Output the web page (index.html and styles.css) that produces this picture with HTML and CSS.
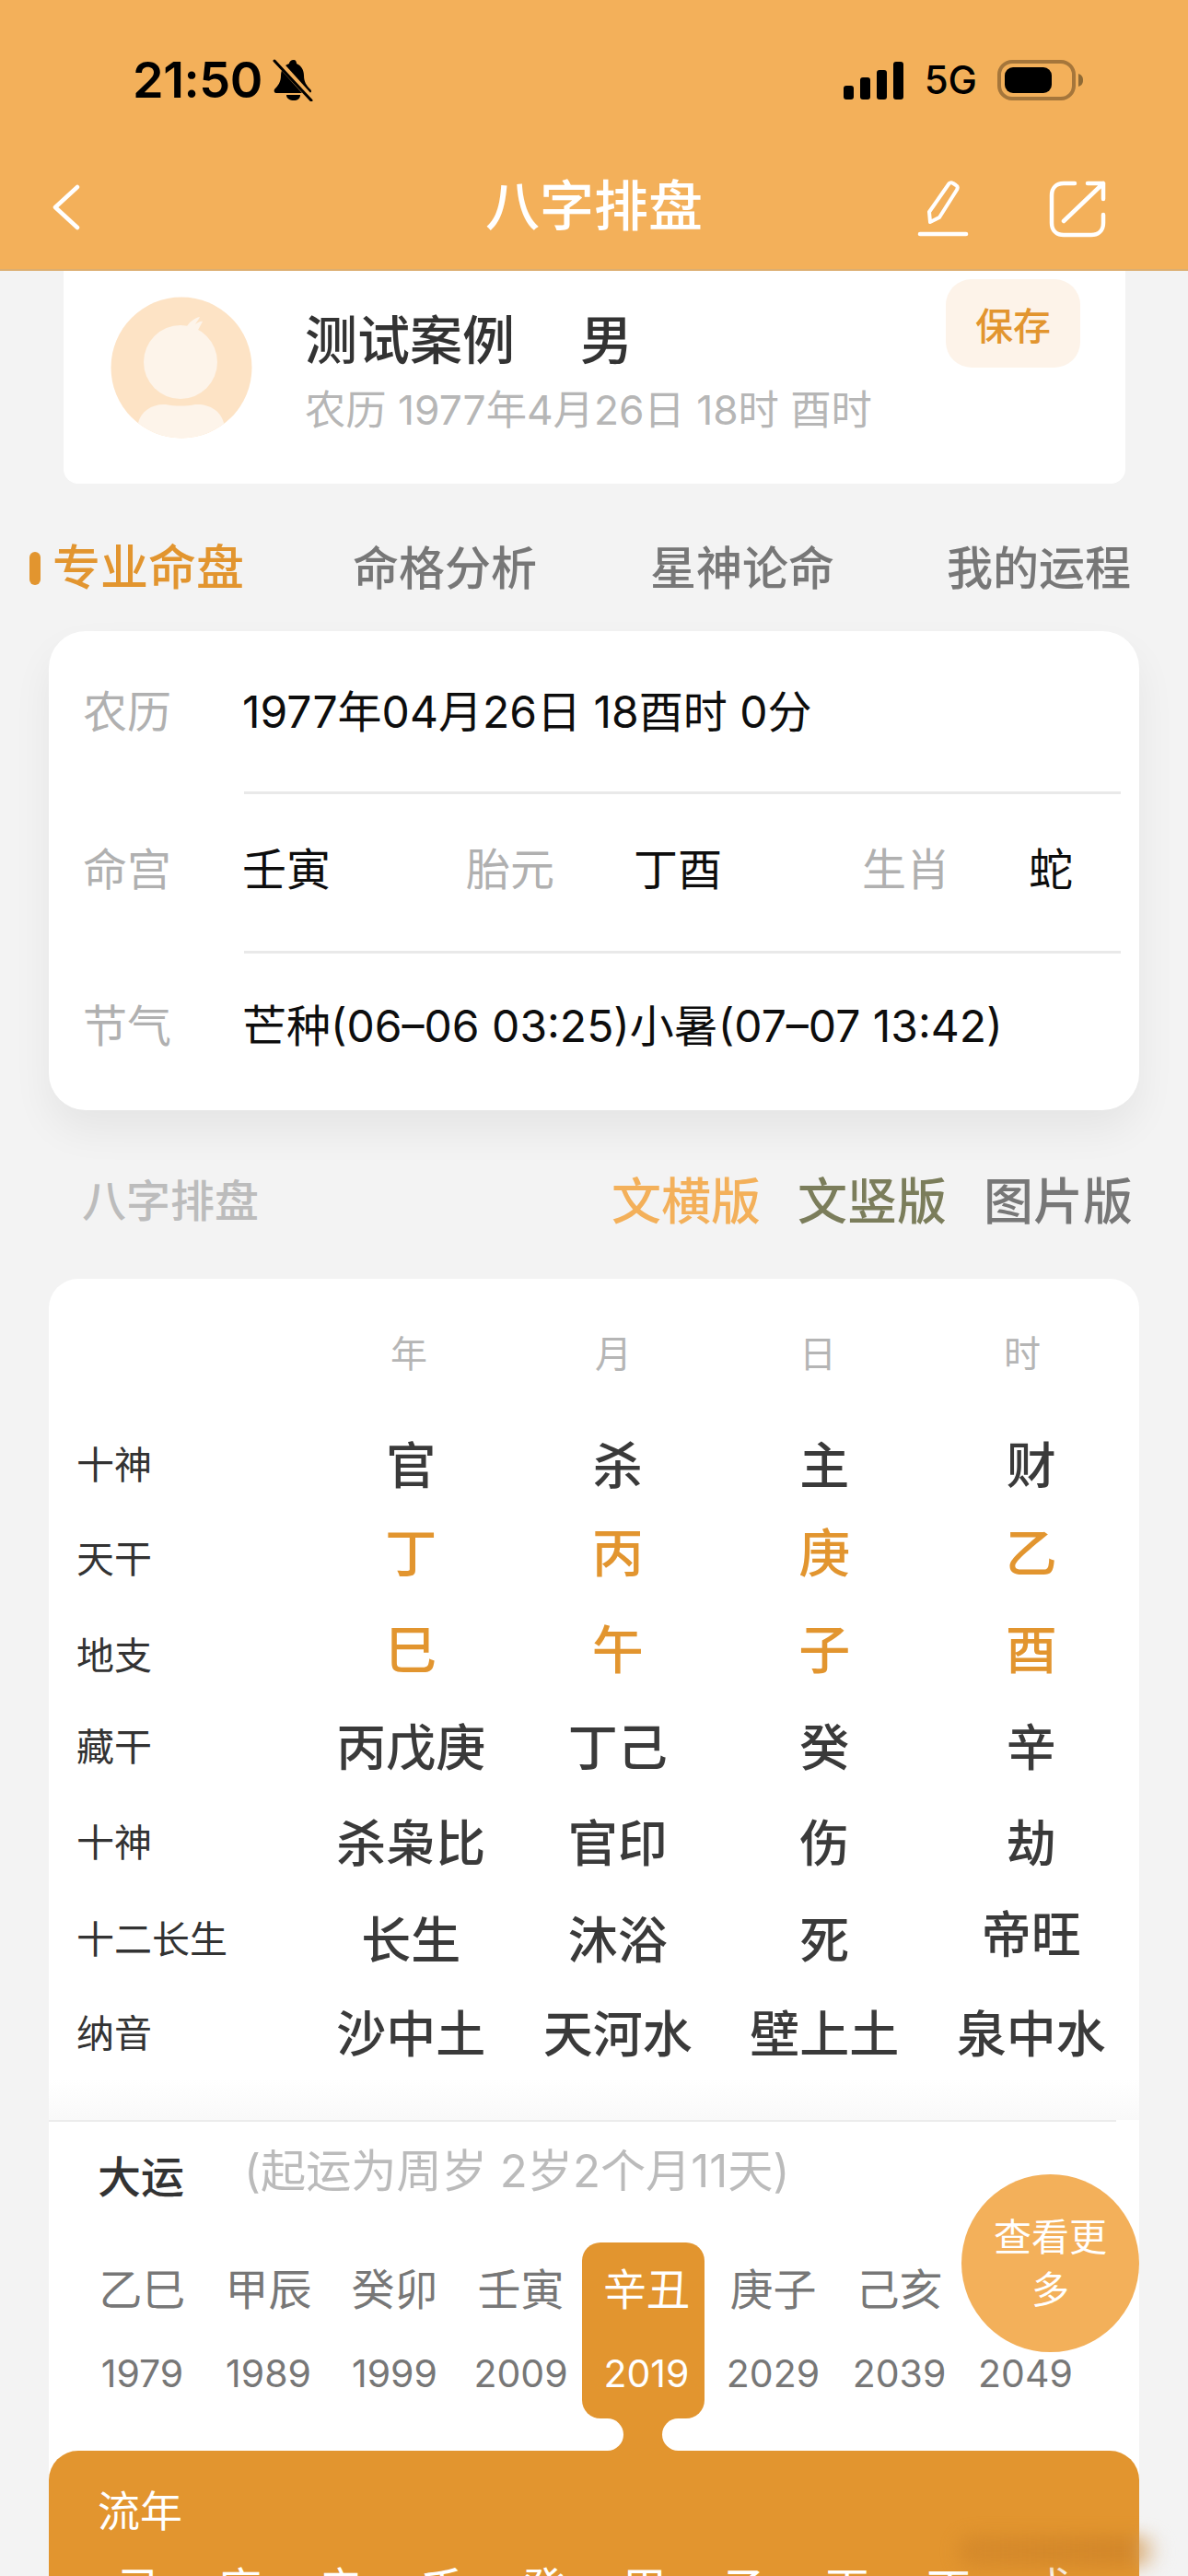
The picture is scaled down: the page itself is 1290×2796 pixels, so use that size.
FILE: index.html
```html
<!DOCTYPE html>
<html lang="zh-CN">
<head>
<meta charset="utf-8">
<title>八字排盘</title>
<link rel="stylesheet" href="styles.css">
</head>
<body>
<div class="page">
  <header class="header">
    <div class="status">
      <div class="status-left">
        <span class="time">21:50</span>
        <svg class="bell" viewBox="0 0 44 46" aria-hidden="true">
          <path d="M23 1c-3 0-5 2-5 4-6 2-9 7-9 13 0 7-3 11-7 15-1 2 0 4 2 4h35c3 0 4-2 2-4-4-4-7-8-7-15 0-6-3-11-8-13 0-2-1-4-3-4z" fill="#000"/>
          <path d="M15 39h15c0 4-3 6-7 6s-8-2-8-6z" fill="#000"/>
          <path d="M4 1l38 42" stroke="#f3b05a" stroke-width="7" fill="none"/>
          <path d="M2 2l40 43" stroke="#000" stroke-width="3" stroke-linecap="round" fill="none"/>
        </svg>
      </div>
      <div class="status-right">
        <div class="signal">
          <i class="bar bar-1"></i><i class="bar bar-2"></i><i class="bar bar-3"></i><i class="bar bar-4"></i>
        </div>
        <span class="net">5G</span>
        <svg class="battery" viewBox="0 0 94 44" aria-hidden="true">
          <rect x="2" y="2" width="81" height="40" rx="14" fill="none" stroke="#a5763b" stroke-width="4"/>
          <rect x="8" y="8" width="51" height="28" rx="9" fill="#000"/>
          <path d="M88 15c3 1 5 3 5 7s-2 6-5 7z" fill="#8f6a35"/>
        </svg>
      </div>
    </div>
    <nav class="nav">
      <svg class="back" viewBox="0 0 30 50" aria-hidden="true">
        <path d="M27 3L3 25l24 22" fill="none" stroke="#fff" stroke-width="4.5" stroke-linecap="round" stroke-linejoin="round"/>
      </svg>
      <h1 class="title">八字排盘</h1>
      <div class="nav-actions">
        <svg class="edit" viewBox="0 0 56 62" aria-hidden="true">
          <path d="M14 45l-1-11 21-30c1-2 3-2 5-1l3 2c2 1 2 3 1 5L24 40z" fill="none" stroke="#fff" stroke-width="4" stroke-linejoin="round"/>
          <path d="M3 58h50" stroke="#fff" stroke-width="4.5" stroke-linecap="round"/>
        </svg>
        <svg class="share" viewBox="0 0 62 62" aria-hidden="true">
          <path d="M28 3H16C8 3 3 8 3 16v30c0 8 5 13 13 13h30c8 0 13-5 13-13V37" fill="none" stroke="#fff" stroke-width="4.5" stroke-linecap="round"/>
          <path d="M16 44L59 3M42 3h17v17" fill="none" stroke="#fff" stroke-width="4.5" stroke-linecap="round" stroke-linejoin="round"/>
        </svg>
      </div>
    </nav>
  </header>

  <section class="profile">
    <svg class="avatar" viewBox="0 0 154 154" aria-hidden="true">
      <defs><clipPath id="avatar-clip"><circle cx="77" cy="77" r="76.5"/></clipPath></defs>
      <circle cx="77" cy="77" r="76.5" fill="#fde3c5"/>
      <g clip-path="url(#avatar-clip)" fill="#fdf4ea">
        <circle cx="76" cy="71" r="40"/>
        <path d="M82 34c3-6 9-11 15-12-2 4-4 6-5 8 3-2 6-4 8-3l-6 11z"/>
        <path d="M30 137c3-13 16-21 30-20 10 2 22 2 32 0 15-1 28 7 31 20l-5 20H35z"/>
      </g>
    </svg>
    <div class="profile-text">
      <div class="profile-name"><span>测试案例</span><span>男</span></div>
      <div class="profile-sub">农历 1977年4月26日 18时 酉时</div>
    </div>
    <button class="save">保存</button>
  </section>

  <div class="tabs">
    <div class="tab tab-active"><i class="tab-mark"></i>专业命盘</div>
    <div class="tab tab-2">命格分析</div>
    <div class="tab tab-3">星神论命</div>
    <div class="tab tab-4">我的运程</div>
  </div>

  <section class="info">
    <div class="info-row info-row-1">
      <span class="muted">农历</span>
      <span>1977年04月26日 18酉时 0分</span>
    </div>
    <div class="info-line"></div>
    <div class="info-row info-row-2">
      <span class="muted">命宫</span><span>壬寅</span>
      <span class="muted">胎元</span><span>丁酉</span>
      <span class="muted">生肖</span><span>蛇</span>
    </div>
    <div class="info-line"></div>
    <div class="info-row info-row-3">
      <span class="muted">节气</span>
      <span>芒种(06–06 03:25)小暑(07–07 13:42)</span>
    </div>
  </section>

  <div class="section-bar">
    <span class="section-title">八字排盘</span>
    <div class="versions">
      <span class="ver-a">文横版</span>
      <span class="ver-b">文竖版</span>
      <span class="ver-c">图片版</span>
    </div>
  </div>

  <section class="chart">
    <div class="chart-head"><span>年</span><span>月</span><span>日</span><span>时</span></div>
    <div class="chart-grid">
      <span class="label">十神</span><span>官</span><span>杀</span><span>主</span><span>财</span>
      <span class="label label-low">天干</span><span class="gold">丁</span><span class="gold">丙</span><span class="gold">庚</span><span class="gold">乙</span>
      <span class="label label-low">地支</span><span class="gold">巳</span><span class="gold">午</span><span class="gold">子</span><span class="gold">酉</span>
      <span class="label">藏干</span><span>丙戊庚</span><span>丁己</span><span>癸</span><span>辛</span>
      <span class="label">十神</span><span>杀枭比</span><span>官印</span><span>伤</span><span>劫</span>
      <span class="label">十二长生</span><span>长生</span><span>沐浴</span><span>死</span><span class="lifted">帝旺</span>
      <span class="label">纳音</span><span>沙中土</span><span>天河水</span><span>壁上土</span><span>泉中水</span>
    </div>
    <div class="chart-fade"></div>
    <div class="chart-line"></div>

    <div class="yun">
      <div class="yun-title">
        <span class="yun-name">大运</span>
        <span class="yun-note">(起运为周岁 2岁2个月11天)</span>
      </div>
      <div class="yun-grid">
        <div class="yun-col"><div class="yun-cell"><b>乙巳</b><em>1979</em></div></div>
        <div class="yun-col"><div class="yun-cell"><b>甲辰</b><em>1989</em></div></div>
        <div class="yun-col"><div class="yun-cell"><b>癸卯</b><em>1999</em></div></div>
        <div class="yun-col"><div class="yun-cell"><b>壬寅</b><em>2009</em></div></div>
        <div class="yun-col yun-col-active">
          <div class="yun-cell yun-cell-active"><b>辛丑</b><em>2019</em></div>
          <div class="neck"></div>
        </div>
        <div class="yun-col"><div class="yun-cell"><b>庚子</b><em>2029</em></div></div>
        <div class="yun-col"><div class="yun-cell"><b>己亥</b><em>2039</em></div></div>
        <div class="yun-col"><div class="yun-cell yun-cell-covered"><em>2049</em></div></div>
      </div>
      <div class="more">查看更多</div>
    </div>

    <div class="liunian">
      <div class="liunian-title">流年</div>
      <div class="liunian-row">
        <span>己</span><span>庚</span><span>辛</span><span>壬</span><span>癸</span><span>甲</span><span>乙</span><span>丙</span><span>丁</span><span>戊</span>
      </div>
    </div>
  </section>
  <div class="smudge"></div>
</div>
</body>
</html>
```
FILE: styles.css
```css
* { box-sizing: border-box; }
html, body { margin: 0; padding: 0; }
body {
  width: 1290px;
  height: 2796px;
  overflow: hidden;
  background: #f3f3f3;
  font-family: Inter, "Noto Sans CJK SC", sans-serif;
  color: #111;
}
.page { position: relative; width: 1290px; height: 2796px; overflow: hidden; }

/* header */
.header {
  height: 294px;
  background: #f3b05a;
  border-bottom: 2px solid #dcae70;
  display: flex;
  flex-direction: column;
}
.status {
  display: flex;
  justify-content: space-between;
  align-items: center;
  height: 46px;
  margin-top: 64px;
  padding: 0 113px 0 144px;
}
.status-left, .status-right { display: flex; align-items: center; }
.time { font: 600 54px/48px Inter, sans-serif; color: #000; letter-spacing: -0.5px; width: 152px; }
.bell { width: 44px; height: 46px; }
.signal { display: flex; align-items: flex-end; gap: 7px; height: 41px; }
.bar { display: block; width: 11px; background: #000; border-radius: 3px; }
.bar-1 { height: 15px; }
.bar-2 { height: 24px; }
.bar-3 { height: 32px; }
.bar-4 { height: 41px; }
.net { font-size: 42px; font-weight: 500; line-height: 48px; color: #000; margin-left: 23px; }
.battery { width: 94px; height: 44px; margin-left: 22px; }

.nav {
  position: relative;
  display: flex;
  align-items: center;
  justify-content: center;
  height: 64px;
  margin-top: 82px;
}
.back { position: absolute; left: 57px; top: 8px; width: 30px; height: 50px; }
.title { margin: 0; font-size: 59px; line-height: 64px; font-weight: 500; color: #fff; }
.nav-actions { position: absolute; left: 996px; top: 4px; display: flex; gap: 87px; }
.edit { width: 56px; height: 62px; }
.share { width: 62px; height: 62px; }

/* profile */
.profile {
  position: relative;
  display: flex;
  height: 231px;
  margin: 0 68px 0 69px;
  padding: 28px 0 0 51px;
  background: #fff;
  border-radius: 0 0 16px 16px;
}
.avatar { width: 154px; height: 154px; flex: none; }
.profile-text { margin-left: 57px; }
.profile-name {
  display: flex;
  gap: 71px;
  font-size: 57px;
  line-height: 66px;
  font-weight: 500;
  color: #333;
  margin-top: 15px;
}
.profile-sub { font-size: 44.3px; line-height: 62px; color: #b6b6b6; margin-top: 11px; white-space: nowrap; }
.save {
  position: absolute;
  top: 9px;
  right: 49px;
  width: 146px;
  height: 96px;
  border: 0;
  border-radius: 28px;
  background: #fdf3e9;
  color: #e2952f;
  font-family: inherit;
  font-size: 41px;
  font-weight: 500;
  padding: 0;
}

/* tabs */
.tabs { display: flex; height: 60px; margin-top: 62px; position: relative; }
.tab {
  position: absolute;
  top: 0;
  font-size: 50px;
  line-height: 60px;
  font-weight: 500;
  color: #777;
  white-space: nowrap;
}
.tab-active { left: 32px; display: flex; align-items: center; gap: 13px; font-size: 52px; color: #e2952f; }
.tab-mark { display: block; width: 12px; height: 36px; border-radius: 6px; background: #e2952f; }
.tab-2 { left: 383px; }
.tab-3 { left: 706px; }
.tab-4 { left: 1028px; }

/* info */
.info {
  height: 520px;
  margin: 38px 53px 0;
  background: #fff;
  border-radius: 40px;
  box-shadow: 0 22px 44px rgba(0, 0, 0, 0.06);
  font-size: 48px;
}
.info-row { display: grid; align-items: center; padding-left: 37px; white-space: nowrap; color: #0d0d0d; }
.info-row-1 { grid-template-columns: 173px 1fr; height: 174px; padding-bottom: 6px; }
.info-row-2 { grid-template-columns: 173px 243px 182px 248px 181px auto; height: 170px; padding-bottom: 14px; }
.info-row-3 { grid-template-columns: 173px 1fr; height: 170px; padding-bottom: 20px; }
.info-line { height: 3px; margin: 0 20px 0 212px; background: #e9e9e9; }
.muted { color: #b0b0b0; }

/* section bar */
.section-bar {
  display: flex;
  justify-content: space-between;
  align-items: center;
  height: 60px;
  margin-top: 65px;
  padding: 0 60px 0 89px;
}
.section-title { font-size: 48px; font-weight: 500; color: #bcbcbc; }
.versions { display: flex; gap: 40px; font-size: 54px; font-weight: 500; }
.ver-a { color: #f3b05a; }
.ver-b { color: #7b7d5b; }
.ver-c { color: #777; }

/* chart */
.chart {
  margin: 58px 53px 0;
  height: 1500px;
  background: #fff;
  border-radius: 32px 32px 0 0;
  position: relative;
}
.chart-head {
  display: grid;
  grid-template-columns: repeat(4, 222px);
  align-items: center;
  justify-items: center;
  height: 150px;
  padding: 8px 0 0 280px;
  font-size: 40px;
  color: #b5b5b5;
}
.chart-grid {
  display: grid;
  grid-template-columns: 281px repeat(4, 224.5px);
  grid-template-rows: 98px 97px 112px 96px 112px 98px 106px;
  align-items: center;
  justify-items: center;
  font-size: 54px;
  font-weight: 500;
  color: #3a3a3a;
  white-space: nowrap;
}
.label { justify-self: start; margin-left: 30px; font-size: 41px; font-weight: 400; color: #333; }
.label-low { margin-top: 9px; }
.gold { color: #e2952f; font-weight: 500; font-size: 56px; margin-bottom: 6px; }
.lifted { margin-bottom: 12px; }
.chart-fade { height: 44px; background: linear-gradient(rgba(246, 246, 246, 0), #f9f9f9); }
.chart-line { height: 2px; margin-right: 25px; background: #ececec; }

/* dayun */
.yun { position: relative; height: 357px; }
.yun-title { display: flex; height: 60px; padding: 26px 0 0 53px; box-sizing: content-box; }
.yun-name { font-size: 47px; line-height: 60px; font-weight: 500; color: #333; width: 159px; margin-top: 4px; }
.yun-note { font-size: 49.2px; line-height: 54px; color: #bbb; white-space: nowrap; }
.yun-grid {
  display: grid;
  grid-template-columns: repeat(8, 137px);
  height: 226px;
  margin-top: 45px;
  padding-left: 33px;
}
.yun-col { display: flex; flex-direction: column; }
.yun-cell {
  display: flex;
  flex-direction: column;
  align-items: center;
  height: 191px;
  padding-top: 21px;
  color: #777;
}
.yun-cell b { font-size: 47px; line-height: 60px; font-weight: 400; }
.yun-cell em { font-style: normal; font-size: 41px; line-height: 60px; margin-top: 31px; }
.yun-cell-covered { padding-top: 112px; }
.yun-cell-covered em { margin-top: 0; }
.yun-col-active { margin: 0 6px 0 -2px; }
.yun-cell-active { background: #e2952f; color: #fff; border-radius: 20px; padding-left: 7px; }
.neck { position: relative; height: 35px; background: #e2952f; }
.neck::before, .neck::after {
  content: "";
  position: absolute;
  top: 0;
  height: 35px;
  background: #fff;
}
.neck::before { left: 0; width: 45px; border-radius: 0 18px 18px 0; }
.neck::after { right: 0; width: 46px; border-radius: 18px 0 0 18px; }
.more {
  position: absolute;
  top: 57px;
  right: 0;
  display: flex;
  align-items: center;
  justify-content: center;
  width: 193px;
  height: 193px;
  padding: 0 33px;
  border-radius: 50%;
  background: #f3b05a;
  color: #fff;
  font-size: 41px;
  line-height: 57px;
  text-align: center;
}

/* liunian */
.liunian {
  height: 200px;
  padding: 35px 0 0 53px;
  background: #e2952f;
  border-radius: 32px 32px 0 0;
  color: #fff;
}
.liunian-title { font-size: 46px; line-height: 60px; }
.liunian-row {
  display: grid;
  grid-template-columns: repeat(10, 110px);
  justify-items: center;
  margin: 31px 0 0 -11px;
  font-size: 48px;
  line-height: 48px;
}

/* blurred watermark */
.smudge {
  position: absolute;
  left: 1040px;
  top: 2752px;
  width: 220px;
  height: 34px;
  background: linear-gradient(90deg, rgba(205, 130, 40, 0.55), rgba(205, 130, 40, 0.7) 85%, rgba(235, 235, 235, 0.4));
  border-radius: 16px;
  filter: blur(9px);
}
```
